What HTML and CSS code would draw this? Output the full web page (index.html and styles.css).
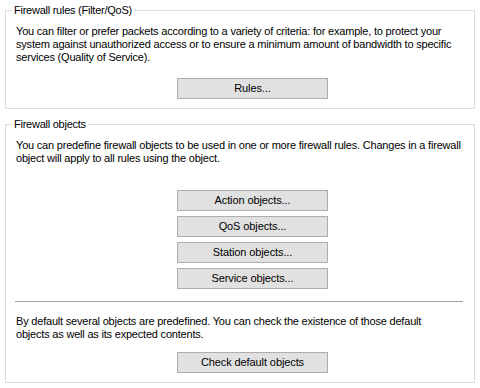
FILE: index.html
```html
<!DOCTYPE html>
<html lang="en">
<head>
  <meta charset="UTF-8">
  <title>Firewall</title>
  <link rel="stylesheet" href="styles.css">
</head>
<body>
  <!-- Regeln -->
  <fieldset class="group group-rules">
    <legend>Firewall rules (Filter/QoS)</legend>
    <p class="info">You can filter or prefer packets according to a variety of criteria: for example, to protect your<br>system against unauthorized access or to ensure a minimum amount of bandwidth to specific<br>services (Quality of Service).</p>
    <div class="actions first">
      <button class="btn">Rules...</button>
    </div>
  </fieldset>

  <!-- Objekte -->
  <fieldset class="group group-objects">
    <legend>Firewall objects</legend>
    <p class="info">You can predefine firewall objects to be used in one or more firewall rules. Changes in a firewall<br>object will apply to all rules using the object.</p>
    <div class="actions list">
      <button class="btn">Action objects...</button>
      <button class="btn">QoS objects...</button>
      <button class="btn">Station objects...</button>
      <button class="btn">Service objects...</button>
    </div>
    <hr class="sep">
    <p class="info">By default several objects are predefined. You can check the existence of those default<br>objects as well as its expected contents.</p>
    <div class="actions last">
      <button class="btn">Check default objects</button>
    </div>
  </fieldset>
</body>
</html>
```

FILE: styles.css
```css
* {
  box-sizing: border-box;
  font-family: "Liberation Sans", Arial, sans-serif;
}

body {
  margin: 0;
  padding-top: 4px;
  background: #fff;
  color: #000;
  font-size: 11px;
  line-height: 13px;
}

.group {
  margin: 0 0 0 5px;
  width: 470px;
  border: 1px solid #dcdcdc;
  padding: 8px 10px 9px 10px;
  min-width: 0;
}

.group legend {
  padding: 0 2px;
  margin-left: -4px;
  line-height: 13px;
  letter-spacing: -0.25px;
}

.group-objects {
  margin-top: 9px;
}

.info {
  margin: 0;
  white-space: nowrap;
  letter-spacing: -0.2px;
}

.actions {
  display: flex;
  flex-direction: column;
  gap: 5px;
  padding-left: 161px;
}

.actions.first {
  margin-top: 14px;
}

.actions.list {
  margin-top: 25px;
}

.actions.last {
  margin-top: 11px;
}

.btn {
  width: 151px;
  height: 21px;
  padding: 0;
  margin: 0;
  background: #e1e1e1;
  border: 1px solid #adadad;
  border-radius: 0;
  color: #000;
  font-size: 11px;
  line-height: 19px;
  text-align: center;
  letter-spacing: -0.1px;
}

.sep {
  margin: 12px 1px 13px -1px;
  border: 0;
  border-top: 1px solid #a0a0a0;
  height: 0;
}
```
